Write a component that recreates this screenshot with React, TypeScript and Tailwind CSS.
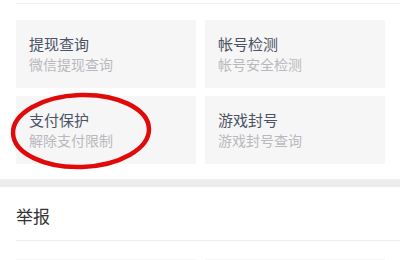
import React from "react";

const items = [
  { title: "提现查询", sub: "微信提现查询" },
  { title: "帐号检测", sub: "帐号安全检测" },
  { title: "支付保护", sub: "解除支付限制" },
  { title: "游戏封号", sub: "游戏封号查询" },
];

export default function App() {
  return (
    <div className="w-[400px] h-[260px] overflow-hidden bg-white font-['Noto_Sans_CJK_SC',sans-serif]">
      <div className="pl-4 pt-[3px]">
        <div className="h-px bg-[#f0f0f0]" />
      </div>
      <div className="relative grid grid-cols-[180px_180px] gap-x-[9px] gap-y-2 pl-4 pt-4">
        {items.map((it) => (
          <div key={it.title} className="h-[68px] bg-[#f6f6f7] pl-[13px] pt-[14px]">
            <div className="text-[15px] leading-[20px] text-[#4b5263]">{it.title}</div>
            <div className="text-[14px] leading-[18px] mt-[1px] text-[#b9b9bd]">{it.sub}</div>
          </div>
        ))}
        <svg className="absolute left-[10px] top-[87px]" width="144" height="80" viewBox="0 0 144 80">
          <ellipse cx="71" cy="40" rx="68" ry="36" fill="none" stroke="#e00a0a" strokeWidth="4.5" transform="rotate(-2 71 40)" />
        </svg>
      </div>
      <div className="h-2 mt-[15px] bg-[#ececec]" />
      <div className="pl-4 pt-[17px]">
        <div className="text-[17px] leading-[24px] text-[#333]">举报</div>
        <div className="h-px mt-[12px] bg-[#ececec]" />
        <div className="grid grid-cols-[180px_180px] gap-x-[9px] mt-[18px]">
          <div className="h-10 bg-[#f6f6f7]" />
          <div className="h-10 bg-[#f6f6f7]" />
        </div>
      </div>
    </div>
  );
}
